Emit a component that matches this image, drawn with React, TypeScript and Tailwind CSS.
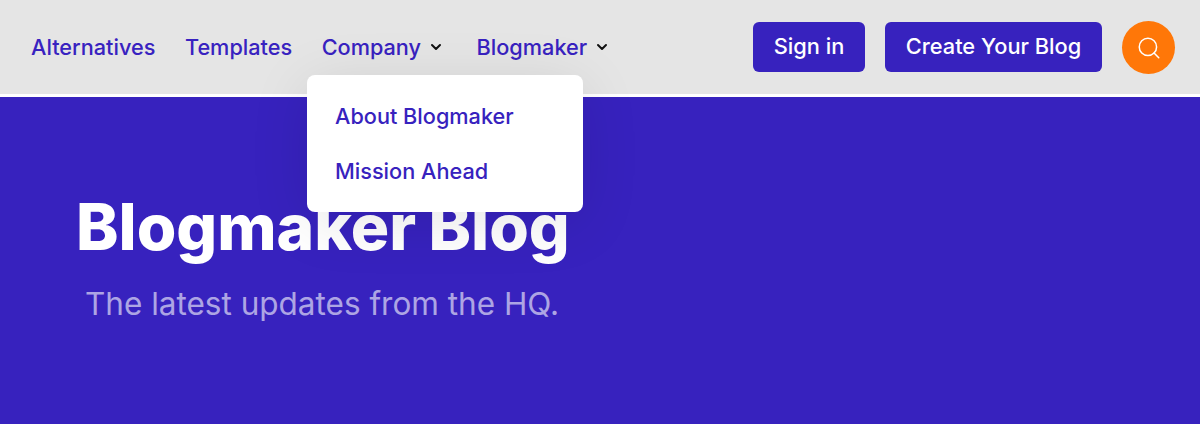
import React from "react";
import { ChevronDown, Search } from "lucide-react";

const NavLink: React.FC<{ label: string; caret?: boolean; className?: string }> = ({ label, caret, className }) => (
  <a className={`flex items-center text-[21.7px] leading-[28px] font-[450] text-[#3822c0] ${className ?? ""}`}>
    {label}
    {caret && <ChevronDown className="ml-[7px] w-[16px] h-[16px] text-[#111111]" strokeWidth={3} />}
  </a>
);

const App: React.FC = () => {
  return (
    <div className="w-[1200px] h-[424px] overflow-hidden bg-[#3722be] font-['Inter',sans-serif]">
      {/* Top bar */}
      <header className="relative z-10 h-[97px] bg-[#e5e5e5] border-b-[3px] border-white flex items-center justify-between pl-[31px] pr-[25px] pb-[1px]">
        <nav className="flex items-center gap-[29.5px]">
          <NavLink label="Alternatives" />
          <NavLink label="Templates" />
          <NavLink label="Company" caret className="mr-[3px]" />
          <NavLink label="Blogmaker" caret />
        </nav>
        <div className="flex items-center">
          <button className="h-[50px] w-[112px] rounded-[6px] bg-[#3722be] text-white text-[21.8px] font-[450]">Sign in</button>
          <button className="ml-[20px] h-[50px] w-[217px] rounded-[6px] bg-[#3722be] text-white text-[21.8px] font-[450]">Create Your Blog</button>
          <button className="ml-[20px] w-[53px] h-[53px] rounded-full bg-[#ff7708] flex items-center justify-center text-white translate-y-[1px]">
            <Search className="w-[26px] h-[26px]" strokeWidth={1.4} />
          </button>
        </div>

        {/* Company dropdown */}
        <div className="absolute left-[307px] top-[75px] w-[276px] h-[137px] bg-white rounded-[8px] shadow-[0_10px_60px_rgba(0,0,0,0.1)] flex flex-col justify-center gap-[27px] pl-[28px] pb-[1px]">
          <a className="text-[21.7px] leading-[28px] font-[450] text-[#3722be]">About Blogmaker</a>
          <a className="text-[21.7px] leading-[28px] font-[450] text-[#3722be]">Mission Ahead</a>
        </div>
      </header>

      {/* Hero */}
      <section className="pl-[76px] pt-[92px]">
        <h1 className="text-[64px] leading-[76px] font-extrabold text-white [word-spacing:-1.5px]">Blogmaker Blog</h1>
        <p className="mt-[19px] ml-[9px] text-[31.5px] leading-[40px] text-white/60">The latest updates from the HQ.</p>
      </section>
    </div>
  );
};

export default App;
